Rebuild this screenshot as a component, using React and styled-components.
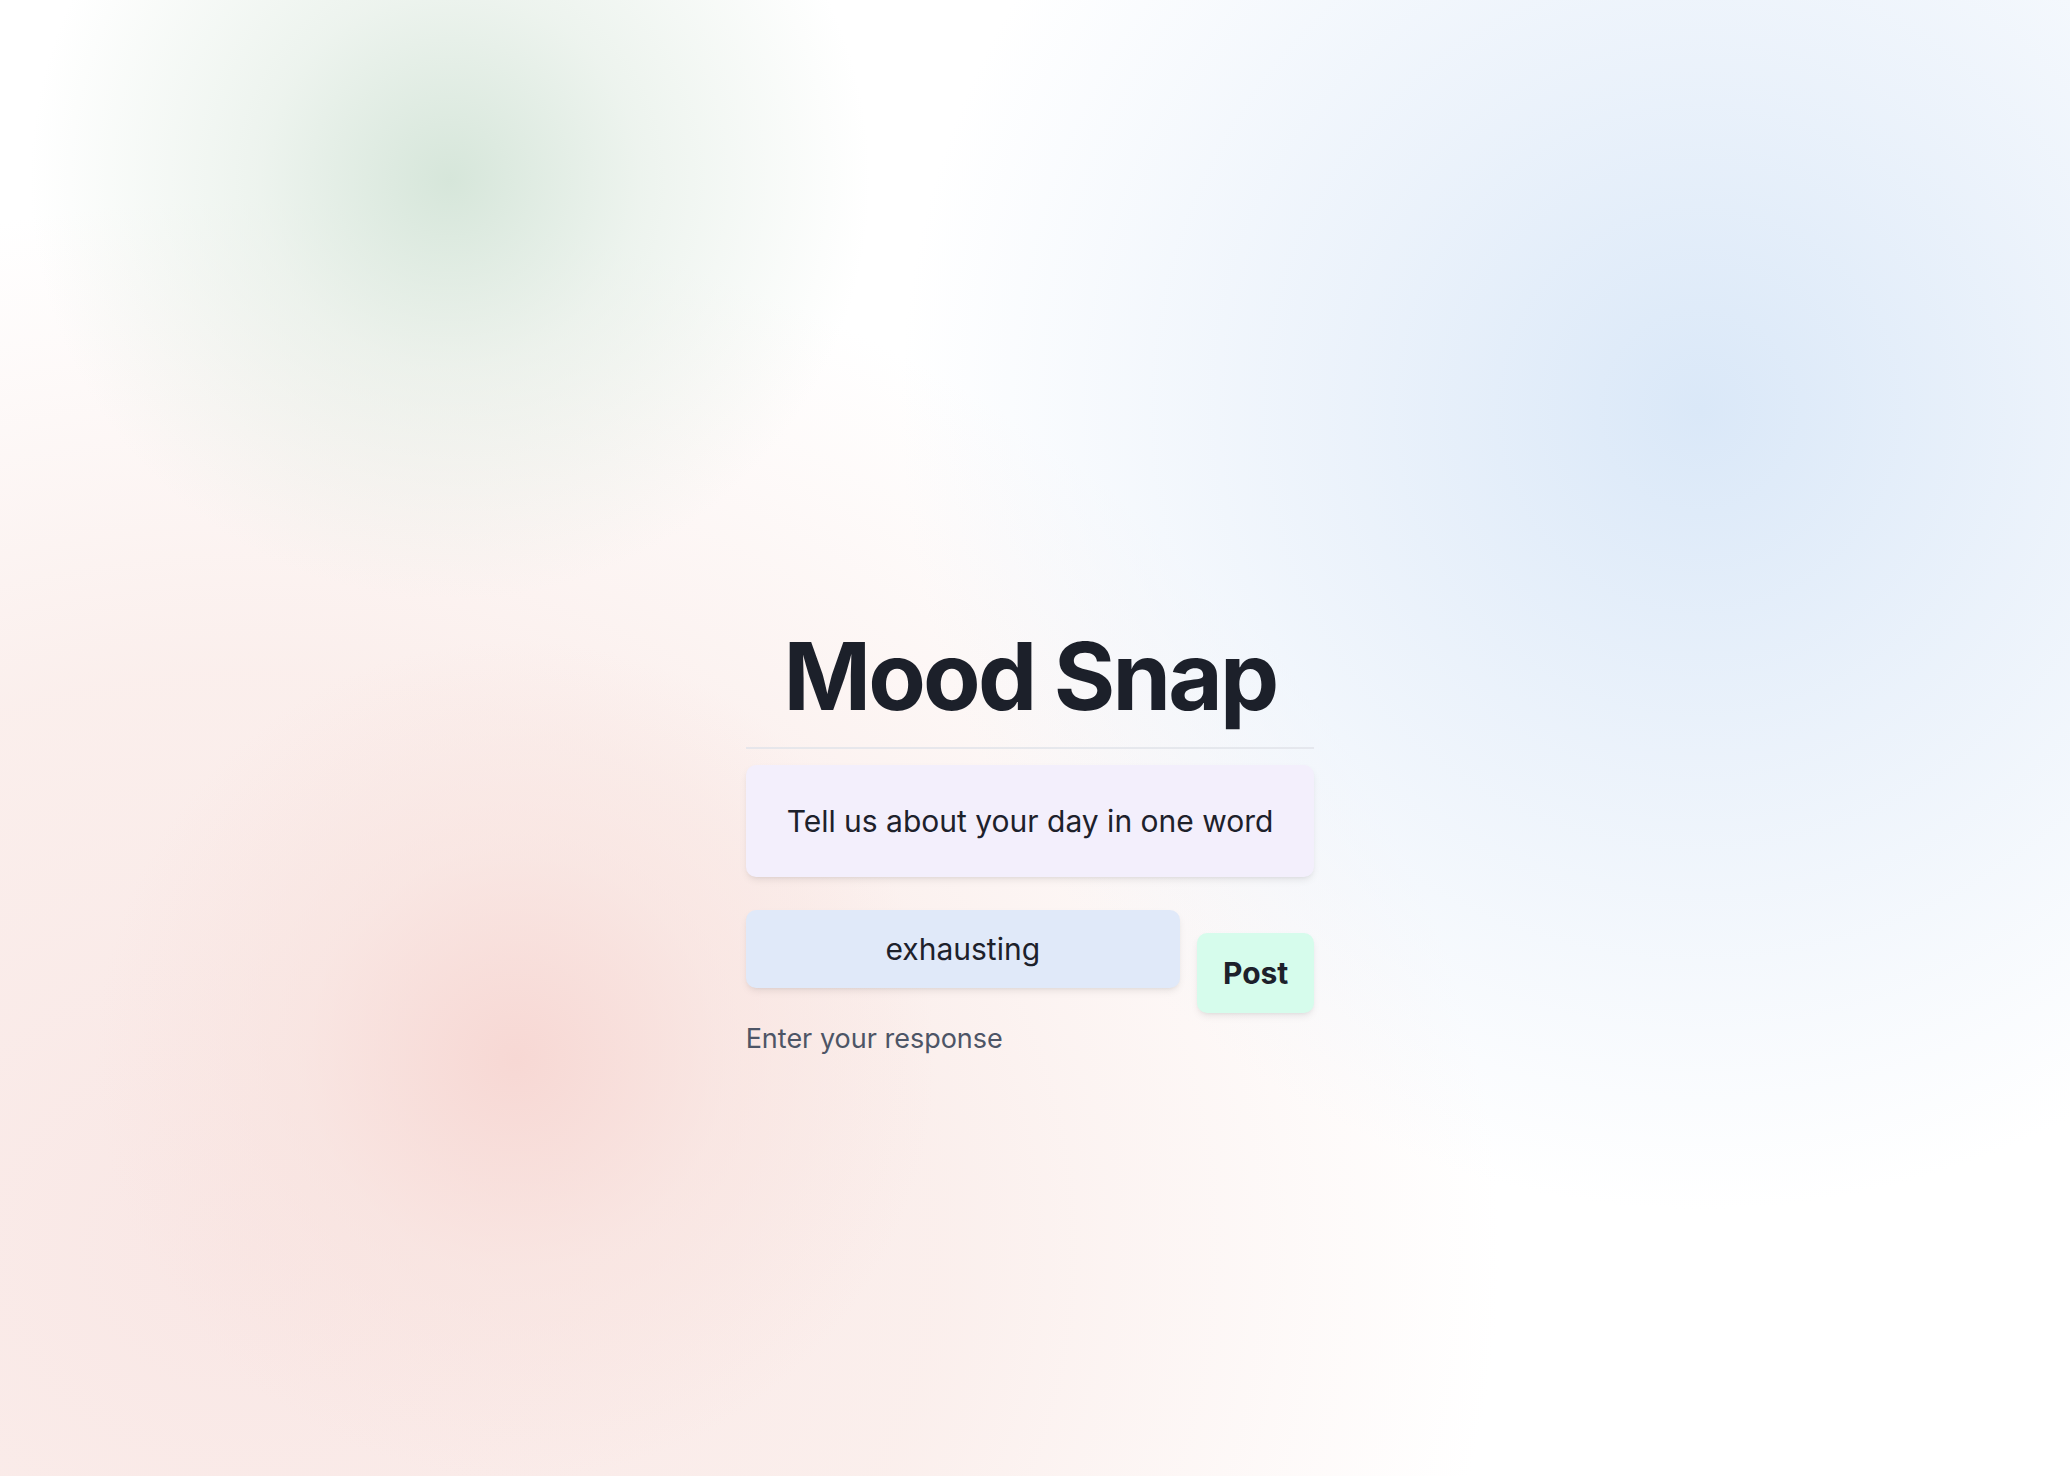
import React, { useState } from "react"
import styled, { createGlobalStyle } from "styled-components"

const GlobalStyle = createGlobalStyle`
  html, body {
    margin: 0;
    padding: 0;
  }

  body {
    min-height: 100vh;
    font-family: Inter, "Noto Sans", "Liberation Sans", sans-serif;
    color: #1d212b;
    background:
      radial-gradient(circle 420px at 450px 180px, rgba(214, 230, 218, 1) 0%, rgba(222, 234, 224, 0.55) 45%, rgba(255, 255, 255, 0) 100%),
      radial-gradient(circle 800px at 1700px 410px, rgba(218, 232, 248, 1) 0%, rgba(230, 239, 250, 0.78) 45%, rgba(255, 255, 255, 0) 100%),
      radial-gradient(circle 420px at 515px 1060px, rgba(247, 216, 212, 1) 0%, rgba(248, 226, 222, 0.6) 50%, rgba(255, 255, 255, 0) 100%),
      radial-gradient(ellipse 1250px 1050px at 250px 1250px, rgba(249, 231, 229, 1) 0%, rgba(250, 236, 233, 0.85) 55%, rgba(255, 255, 255, 0) 100%),
      #ffffff;
  }
`

const Page = styled.main`
  display: flex;
  justify-content: center;
  padding: 629px 10px 0 0;
  box-sizing: border-box;
  min-height: 100vh;
`

const Wrapper = styled.div`
  display: flex;
  flex-direction: column;
  width: fit-content;
`

const Title = styled.h1`
  margin: 0 0 24px;
  font-size: 94px;
  line-height: 1;
  font-weight: 700;
  letter-spacing: -0.03em;
  text-align: center;
  white-space: nowrap;
  color: #1c202a;
`

const Divider = styled.hr`
  margin: 0 0 16px;
  border: 0;
  height: 2px;
  background-color: rgba(225, 228, 234, 0.8);
`

const PromptCard = styled.div`
  padding: 40px 41px;
  border-radius: 10px;
  background-color: #f3effc;
  box-shadow: 0 4px 8px -2px rgba(0, 0, 0, 0.1), 0 2px 4px -2px rgba(0, 0, 0, 0.06);
  font-size: 30px;
  line-height: 32px;
  text-align: center;
  white-space: nowrap;
`

const FormRow = styled.form`
  display: flex;
  align-items: flex-start;
  gap: 17px;
  margin-top: 33px;
`

const Field = styled.div`
  display: flex;
  flex: 1;
  flex-direction: column;
  min-width: 0;
`

const Input = styled.input`
  box-sizing: border-box;
  width: 100%;
  min-width: 0;
  height: 78px;
  padding: 0 20px;
  border: 0;
  border-radius: 10px;
  outline: none;
  background-color: #e0e9f9;
  box-shadow: 0 4px 8px -2px rgba(0, 0, 0, 0.1), 0 2px 4px -2px rgba(0, 0, 0, 0.06);
  font-family: inherit;
  font-size: 30px;
  color: #1d212b;
  text-align: center;
`

const Hint = styled.p`
  margin: 35px 0 0;
  font-size: 27px;
  line-height: 32px;
  white-space: nowrap;
  color: #4d5566;
`

const PostButton = styled.button`
  box-sizing: border-box;
  flex-shrink: 0;
  height: 80px;
  margin-top: 23px;
  padding: 0 26px;
  border: 0;
  border-radius: 10px;
  background-color: #d6fcec;
  box-shadow: 0 4px 8px -2px rgba(0, 0, 0, 0.1), 0 2px 4px -2px rgba(0, 0, 0, 0.06);
  font-family: inherit;
  font-size: 30px;
  font-weight: 700;
  color: #1d212b;
  cursor: pointer;
`

export default function App() {
  const [mood, setMood] = useState("exhausting")

  return (
    <>
      <GlobalStyle />
      <Page>
        <Wrapper>
          <Title>Mood Snap</Title>
          <Divider />
          <PromptCard>Tell us about your day in one word</PromptCard>
          <FormRow onSubmit={(e) => e.preventDefault()}>
            <Field>
              <Input
                type="text"
                size={1}
                value={mood}
                onChange={(e) => setMood(e.target.value)}
              />
              <Hint>Enter your response</Hint>
            </Field>
            <PostButton type="submit">Post</PostButton>
          </FormRow>
        </Wrapper>
      </Page>
    </>
  )
}
